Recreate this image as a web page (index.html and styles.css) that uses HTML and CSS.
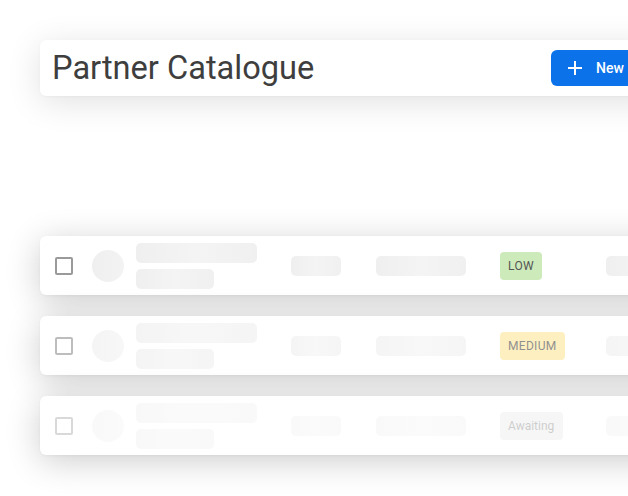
FILE: index.html
```html
<!DOCTYPE html>
<html lang="en">
<head>
<meta charset="utf-8">
<title>Partner Catalogue</title>
<link rel="stylesheet" href="styles.css">
</head>
<body>
<main class="page">
  <header class="header-card">
    <h1 class="title">Partner Catalogue</h1>
    <button class="btn-new" type="button">
      <svg class="plus" width="16" height="16" viewBox="0 0 16 16" aria-hidden="true">
        <path d="M8 1v14M1 8h14" stroke="#fff" stroke-width="2" fill="none"/>
      </svg>
      <span>New</span>
    </button>
  </header>

  <section class="rows">
    <div class="row">
      <div class="cell"><span class="check"></span></div>
      <div class="cell"><span class="avatar"></span></div>
      <div class="cell name"><span class="sk sk-name"></span><span class="sk sk-sub"></span></div>
      <div class="cell"><span class="sk sk-50"></span></div>
      <div class="cell"><span class="sk sk-90"></span></div>
      <div class="cell"><span class="badge badge-low">LOW</span></div>
      <div class="cell"><span class="sk sk-end"></span></div>
    </div>
    <div class="row row-dim1">
      <div class="cell"><span class="check"></span></div>
      <div class="cell"><span class="avatar"></span></div>
      <div class="cell name"><span class="sk sk-name"></span><span class="sk sk-sub"></span></div>
      <div class="cell"><span class="sk sk-50"></span></div>
      <div class="cell"><span class="sk sk-90"></span></div>
      <div class="cell"><span class="badge badge-medium">MEDIUM</span></div>
      <div class="cell"><span class="sk sk-end"></span></div>
    </div>
    <div class="row row-dim2">
      <div class="cell"><span class="check"></span></div>
      <div class="cell"><span class="avatar"></span></div>
      <div class="cell name"><span class="sk sk-name"></span><span class="sk sk-sub"></span></div>
      <div class="cell"><span class="sk sk-50"></span></div>
      <div class="cell"><span class="sk sk-90"></span></div>
      <div class="cell"><span class="badge badge-awaiting">Awaiting</span></div>
      <div class="cell"><span class="sk sk-end"></span></div>
    </div>
  </section>
</main>
</body>
</html>
```

FILE: styles.css
```css
* { box-sizing: border-box; }

html, body {
  margin: 0;
  padding: 0;
  background: #ffffff;
  overflow: hidden;
  width: 628px;
  height: 496px;
}

body {
  font-family: Roboto, "Noto Sans", "Liberation Sans", sans-serif;
}

.page {
  padding: 40px 0 0 40px;
  width: 760px;
}

.header-card {
  width: 623px;
  height: 56px;
  background: #fff;
  border-radius: 6px;
  box-shadow: 0 6px 34px rgba(0, 0, 0, 0.12), 0 1px 3px rgba(0, 0, 0, 0.03);
  display: flex;
  align-items: center;
  padding: 0 12px 0 12px;
}

.title {
  margin: 0;
  font-size: 32.6px;
  font-weight: 400;
  color: #3e3e3e;
}

.btn-new {
  margin-left: auto;
  height: 36px;
  width: 100px;
  flex: none;
  border: none;
  border-radius: 6px;
  background: #0b72ea;
  color: #fff;
  display: flex;
  align-items: center;
  gap: 13px;
  padding: 0 16px;
  font-family: Roboto, "Noto Sans", sans-serif;
  font-size: 14px;
  font-weight: 500;
}

.plus { flex: none; }

.rows {
  margin-top: 140px;
  display: flex;
  flex-direction: column;
  gap: 21px;
}

.row {
  width: 700px;
  height: 59px;
  background: #fff;
  border-radius: 6px;
  box-shadow: 0 6px 34px rgba(0, 0, 0, 0.2), 0 1px 3px rgba(0, 0, 0, 0.04);
  display: grid;
  grid-template-columns: 37px 44px 155px 85px 124px 106px 80px;
  align-items: center;
  padding-left: 15px;
}

.row-dim1 > .cell { opacity: 0.65; }
.row-dim2 > .cell { opacity: 0.38; }

.cell {
  display: flex;
  align-items: center;
}

.cell.name {
  flex-direction: column;
  align-items: flex-start;
  gap: 6px;
}

.check {
  width: 18px;
  height: 18px;
  border: 2px solid #9a9a9a;
  border-radius: 2px;
  display: block;
}

.avatar {
  width: 32px;
  height: 32px;
  border-radius: 50%;
  background: linear-gradient(90deg, #efefef, #f3f3f3);
  display: block;
}

.sk {
  display: block;
  height: 20px;
  border-radius: 5px;
  background: linear-gradient(90deg, #efefef 0%, #f4f4f4 50%, #f0f0f0 100%);
}

.sk-name { width: 121px; }
.sk-sub { width: 78px; }
.sk-50 { width: 50px; }
.sk-90 { width: 90px; }
.sk-end { width: 80px; }

.badge {
  display: inline-flex;
  align-items: center;
  height: 28px;
  padding: 0 8px;
  border-radius: 4px;
  font-size: 12px;
  font-weight: 400;
  letter-spacing: 0.3px;
  color: #555;
}

.badge-low { background: #cdeabb; }
.badge-medium { background: #fde89e; }
.badge-awaiting {
  background: #eaeaea;
  letter-spacing: 0;
  color: #7e7e7e;
  width: 63px;
}
```
